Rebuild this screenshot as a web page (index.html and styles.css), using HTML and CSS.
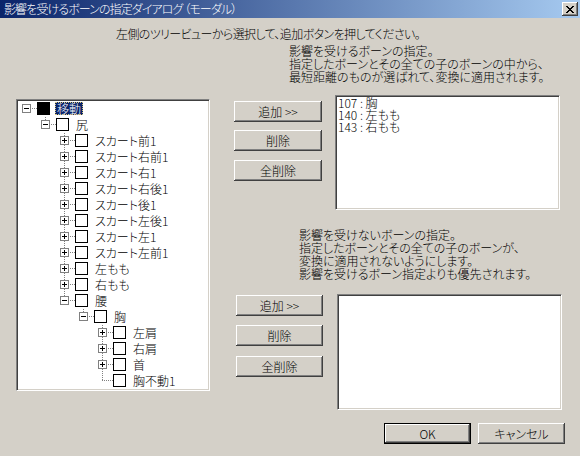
FILE: index.html
```html
<!DOCTYPE html>
<html lang="ja">
<head>
<meta charset="utf-8">
<title>影響を受けるボーンの指定ダイアログ</title>
<link rel="stylesheet" href="styles.css">
</head>
<body>
<div class="dlg">
  <div class="titlebar">
    <span class="title">影響を受けるボーンの指定ダイアログ （モーダル）</span>
    <span class="closebtn"><svg width="8" height="7" viewBox="0 0 8 7" shape-rendering="crispEdges"><path fill="#000" d="M0 0h2v1H0zM6 0h2v1H6zM1 1h2v1H1zM5 1h2v1H5zM2 2h4v1H2zM3 3h2v1H3zM2 4h4v1H2zM1 5h2v1H1zM5 5h2v1H5zM0 6h2v1H0zM6 6h2v1H6z"/></svg></span>
  </div>
  <div class="client">
    <div class="instr">左側のツリービューから選択して、追加ボタンを押してください。</div>
    <div class="main">
      <div class="tree sunken">
        <div class="row"><span class="cell ln-h"><svg class="exp" width="9" height="9"><rect x="0.5" y="0.5" width="8" height="8" fill="#fff" stroke="#808080"/><path d="M2 4.5h5" stroke="#000"/></svg></span><span class="chk on"></span><span class="lbl sel">移動</span></div>
        <div class="row"><span class="cell"></span><span class="cell ln-e"><svg class="exp" width="9" height="9"><rect x="0.5" y="0.5" width="8" height="8" fill="#fff" stroke="#808080"/><path d="M2 4.5h5" stroke="#000"/></svg></span><span class="chk"></span><span class="lbl">尻</span></div>
        <div class="row"><span class="cell"></span><span class="cell"></span><span class="cell ln-t"><svg class="exp" width="9" height="9"><rect x="0.5" y="0.5" width="8" height="8" fill="#fff" stroke="#808080"/><path d="M2 4.5h5M4.5 2v5" stroke="#000"/></svg></span><span class="chk"></span><span class="lbl">スカート前1</span></div>
        <div class="row"><span class="cell"></span><span class="cell"></span><span class="cell ln-t"><svg class="exp" width="9" height="9"><rect x="0.5" y="0.5" width="8" height="8" fill="#fff" stroke="#808080"/><path d="M2 4.5h5M4.5 2v5" stroke="#000"/></svg></span><span class="chk"></span><span class="lbl">スカート右前1</span></div>
        <div class="row"><span class="cell"></span><span class="cell"></span><span class="cell ln-t"><svg class="exp" width="9" height="9"><rect x="0.5" y="0.5" width="8" height="8" fill="#fff" stroke="#808080"/><path d="M2 4.5h5M4.5 2v5" stroke="#000"/></svg></span><span class="chk"></span><span class="lbl">スカート右1</span></div>
        <div class="row"><span class="cell"></span><span class="cell"></span><span class="cell ln-t"><svg class="exp" width="9" height="9"><rect x="0.5" y="0.5" width="8" height="8" fill="#fff" stroke="#808080"/><path d="M2 4.5h5M4.5 2v5" stroke="#000"/></svg></span><span class="chk"></span><span class="lbl">スカート右後1</span></div>
        <div class="row"><span class="cell"></span><span class="cell"></span><span class="cell ln-t"><svg class="exp" width="9" height="9"><rect x="0.5" y="0.5" width="8" height="8" fill="#fff" stroke="#808080"/><path d="M2 4.5h5M4.5 2v5" stroke="#000"/></svg></span><span class="chk"></span><span class="lbl">スカート後1</span></div>
        <div class="row"><span class="cell"></span><span class="cell"></span><span class="cell ln-t"><svg class="exp" width="9" height="9"><rect x="0.5" y="0.5" width="8" height="8" fill="#fff" stroke="#808080"/><path d="M2 4.5h5M4.5 2v5" stroke="#000"/></svg></span><span class="chk"></span><span class="lbl">スカート左後1</span></div>
        <div class="row"><span class="cell"></span><span class="cell"></span><span class="cell ln-t"><svg class="exp" width="9" height="9"><rect x="0.5" y="0.5" width="8" height="8" fill="#fff" stroke="#808080"/><path d="M2 4.5h5M4.5 2v5" stroke="#000"/></svg></span><span class="chk"></span><span class="lbl">スカート左1</span></div>
        <div class="row"><span class="cell"></span><span class="cell"></span><span class="cell ln-t"><svg class="exp" width="9" height="9"><rect x="0.5" y="0.5" width="8" height="8" fill="#fff" stroke="#808080"/><path d="M2 4.5h5M4.5 2v5" stroke="#000"/></svg></span><span class="chk"></span><span class="lbl">スカート左前1</span></div>
        <div class="row"><span class="cell"></span><span class="cell"></span><span class="cell ln-t"><svg class="exp" width="9" height="9"><rect x="0.5" y="0.5" width="8" height="8" fill="#fff" stroke="#808080"/><path d="M2 4.5h5M4.5 2v5" stroke="#000"/></svg></span><span class="chk"></span><span class="lbl">左もも</span></div>
        <div class="row"><span class="cell"></span><span class="cell"></span><span class="cell ln-t"><svg class="exp" width="9" height="9"><rect x="0.5" y="0.5" width="8" height="8" fill="#fff" stroke="#808080"/><path d="M2 4.5h5M4.5 2v5" stroke="#000"/></svg></span><span class="chk"></span><span class="lbl">右もも</span></div>
        <div class="row"><span class="cell"></span><span class="cell"></span><span class="cell ln-e"><svg class="exp" width="9" height="9"><rect x="0.5" y="0.5" width="8" height="8" fill="#fff" stroke="#808080"/><path d="M2 4.5h5" stroke="#000"/></svg></span><span class="chk"></span><span class="lbl">腰</span></div>
        <div class="row"><span class="cell"></span><span class="cell"></span><span class="cell"></span><span class="cell ln-e"><svg class="exp" width="9" height="9"><rect x="0.5" y="0.5" width="8" height="8" fill="#fff" stroke="#808080"/><path d="M2 4.5h5" stroke="#000"/></svg></span><span class="chk"></span><span class="lbl">胸</span></div>
        <div class="row"><span class="cell"></span><span class="cell"></span><span class="cell"></span><span class="cell"></span><span class="cell ln-t"><svg class="exp" width="9" height="9"><rect x="0.5" y="0.5" width="8" height="8" fill="#fff" stroke="#808080"/><path d="M2 4.5h5M4.5 2v5" stroke="#000"/></svg></span><span class="chk"></span><span class="lbl">左肩</span></div>
        <div class="row"><span class="cell"></span><span class="cell"></span><span class="cell"></span><span class="cell"></span><span class="cell ln-t"><svg class="exp" width="9" height="9"><rect x="0.5" y="0.5" width="8" height="8" fill="#fff" stroke="#808080"/><path d="M2 4.5h5M4.5 2v5" stroke="#000"/></svg></span><span class="chk"></span><span class="lbl">右肩</span></div>
        <div class="row"><span class="cell"></span><span class="cell"></span><span class="cell"></span><span class="cell"></span><span class="cell ln-t"><svg class="exp" width="9" height="9"><rect x="0.5" y="0.5" width="8" height="8" fill="#fff" stroke="#808080"/><path d="M2 4.5h5M4.5 2v5" stroke="#000"/></svg></span><span class="chk"></span><span class="lbl">首</span></div>
        <div class="row"><span class="cell"></span><span class="cell"></span><span class="cell"></span><span class="cell"></span><span class="cell ln-e"></span><span class="chk"></span><span class="lbl">胸不動1</span></div>
      </div>
      <div class="side">
        <div class="desc desc1">影響を受けるボーンの指定。<br>指定したボーンとその全ての子のボーンの中から、<br>最短距離のものが選ばれて、変換に適用されます。</div>
        <div class="group group1">
          <div class="btns">
            <button class="btn">追加 &gt;&gt;</button>
            <button class="btn">削除</button>
            <button class="btn">全削除</button>
          </div>
          <div class="list sunken">
            <div class="item">107 : 胸</div>
            <div class="item">140 : 左もも</div>
            <div class="item">143 : 右もも</div>
          </div>
        </div>
        <div class="desc desc2">影響を受けないボーンの指定。<br>指定したボーンとその全ての子のボーンが、<br>変換に適用されないようにします。<br>影響を受けるボーン指定よりも優先されます。</div>
        <div class="group group2">
          <div class="btns">
            <button class="btn">追加 &gt;&gt;</button>
            <button class="btn">削除</button>
            <button class="btn">全削除</button>
          </div>
          <div class="list sunken"></div>
        </div>
      </div>
    </div>
    <div class="footer">
      <button class="btn default">OK</button>
      <button class="btn">キャンセル</button>
    </div>
  </div>
</div>
</body>
</html>
```
FILE: styles.css
```css
html, body {
  margin: 0;
  padding: 0;
}
body {
  width: 580px;
  height: 456px;
  overflow: hidden;
  background: #d4d0c8;
  font-family: "Noto Sans CJK JP", "Liberation Sans", sans-serif;
  font-size: 12px;
  font-weight: 300;
  font-feature-settings: "palt";
  color: #000;
}
.dlg {
  width: 580px;
  height: 456px;
}
.titlebar {
  height: 18px;
  display: flex;
  align-items: center;
  justify-content: space-between;
  padding: 0 2px 0 4px;
  background: linear-gradient(to right, #0a246a, #a6caf0);
  color: #fff;
}
.title {
  line-height: 18px;
  white-space: nowrap;
  letter-spacing: -0.9px;
}
.closebtn {
  box-sizing: border-box;
  width: 16px;
  height: 14px;
  display: flex;
  align-items: center;
  justify-content: center;
  background: #d4d0c8;
  box-shadow: inset -1px -1px #404040, inset 1px 1px #fff, inset -2px -2px #808080;
}
.client {
  display: flex;
  flex-direction: column;
}
.instr {
  margin: 10px 0 0 116px;
  line-height: 12px;
  height: 12px;
  white-space: nowrap;
  letter-spacing: -0.6px;
}
.main {
  display: flex;
  align-items: flex-start;
  margin-top: 4px;
}
.sunken {
  box-sizing: border-box;
  border: 1px solid;
  border-color: #808080 #fff #fff #808080;
  box-shadow: inset 1px 1px #404040, inset -1px -1px #d4d0c8;
  background: #fff;
  padding: 1px;
}
.tree {
  margin: 55px 0 0 16px;
  width: 194px;
  height: 292px;
  overflow: hidden;
}
.row {
  display: flex;
  height: 16px;
  align-items: flex-start;
  white-space: nowrap;
}
.cell {
  flex: none;
  width: 19px;
  height: 16px;
  background-repeat: no-repeat;
}
.ln-h {
  background-image: repeating-linear-gradient(to right, #808080 0 1px, transparent 1px 2px);
  background-position: 8px 7px;
  background-size: 11px 1px;
}
.ln-t {
  background-image: repeating-linear-gradient(to right, #808080 0 1px, transparent 1px 2px),
                    repeating-linear-gradient(to bottom, #808080 0 1px, transparent 1px 2px);
  background-position: 8px 7px, 8px 0;
  background-size: 11px 1px, 1px 16px;
}
.ln-e {
  background-image: repeating-linear-gradient(to right, #808080 0 1px, transparent 1px 2px),
                    repeating-linear-gradient(to bottom, #808080 0 1px, transparent 1px 2px);
  background-position: 8px 7px, 8px 0;
  background-size: 11px 1px, 1px 8px;
}
.exp {
  display: block;
  margin: 3px 0 0 4px;
}
.chk {
  flex: none;
  box-sizing: border-box;
  width: 13px;
  height: 13px;
  margin-top: 1px;
  border: 1px solid #000;
  background: #fff;
}
.chk.on {
  background: #000;
}
.lbl {
  margin: 1px 0 0 5px;
  padding: 0 2px;
  height: 13px;
  line-height: 13px;
}
.lbl.sel {
  background: #0a246a;
  color: #fff;
  outline: 1px dotted #d8c880;
  outline-offset: -1px;
}
.side {
  margin-left: 24px;
  display: flex;
  flex-direction: column;
}
.desc {
  line-height: 13px;
  white-space: nowrap;
}
.desc1 {
  padding-left: 55px;
}
.desc2 {
  padding-left: 65px;
  margin-top: 18px;
}
.group {
  display: flex;
  align-items: flex-start;
}
.group1 {
  margin-top: 12px;
}
.group2 {
  margin-top: 14px;
}
.btns {
  display: flex;
  flex-direction: column;
}
.group1 .btns {
  width: 88px;
  margin-top: 6px;
  gap: 8px;
}
.group2 .btns {
  width: 87px;
  margin: 1px 0 0 2px;
  gap: 9px;
}
.btns .btn:last-child {
  margin-top: 1px;
}
.btn {
  box-sizing: border-box;
  height: 21px;
  padding: 0;
  border: none;
  background: #d4d0c8;
  font-family: inherit;
  font-size: 12px;
  font-weight: 300;
  font-feature-settings: "palt";
  color: #000;
  line-height: 19px;
  box-shadow: inset -1px -1px #404040, inset 1px 1px #fff, inset -2px -2px #808080;
}
.list {
  width: 225px;
  padding-left: 2px;
}
.group1 .list {
  margin-left: 13px;
  height: 115px;
}
.group2 .list {
  margin-left: 14px;
  height: 116px;
}
.item {
  line-height: 12px;
  height: 12px;
  white-space: nowrap;
}
.footer {
  display: flex;
  justify-content: flex-end;
  gap: 7px;
  margin-top: 13px;
  padding-right: 15px;
}
.footer .btn {
  width: 87px;
}
.btn.default {
  border: 1px solid #000;
}
```
